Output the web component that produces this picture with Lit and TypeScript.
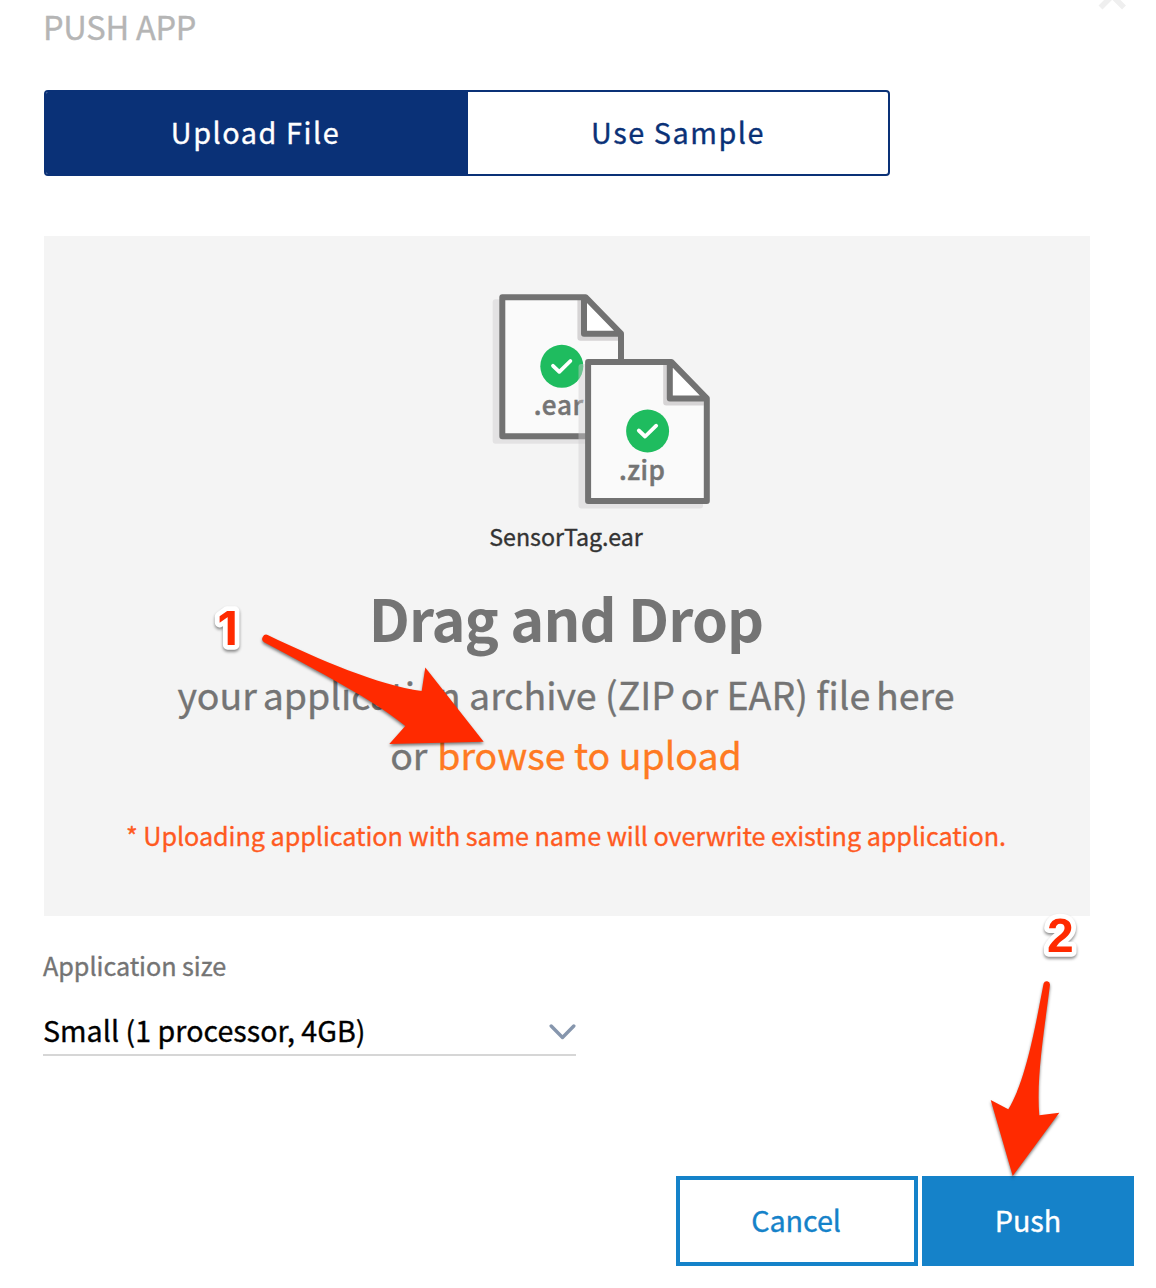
import { LitElement, html, svg, css } from "lit";
import { customElement, state } from "lit/decorators.js";

const fileIcon = (label: string, x: number, labelWidth: number, dx: number, dy: number) => svg`
  <g transform="translate(${dx} ${dy})">
    <path d="M495.700 299.300H570L617.200 350V440.700a3 3 0 0 1-3 3H495.700a3 3 0 0 1-3-3V302.300a3 3 0 0 1 3-3Z" fill="#cfccce" fill-opacity=".45"/>
    <path d="M502.3 297.2H585.5L621 333.7V436.2H502.3Z" fill="#fafafa"/>
    <path d="M577.4 300H586V333H618V340.8H580.4a3 3 0 0 1-3-3Z" fill="#d6d4d5"/>
    <path d="M584 297.2V333.7H621Z" fill="#fff"/>
    <path d="M502.3 297.2H585.5L621 333.7V436.2H502.3ZM584 297.2V333.7H621" fill="none" stroke="#727272" stroke-width="6" stroke-linejoin="round" stroke-linecap="round"/>
    <circle cx="561.8" cy="366.3" r="21.5" fill="#1fbc5f"/>
    <path d="M553 365.8L559.3 371.8L570.4 361" fill="none" stroke="#fff" stroke-width="3.8" stroke-linecap="round" stroke-linejoin="round"/>
    <text class="ext" x=${x} y="415" textLength=${labelWidth}>${label}</text>
  </g>`;

@customElement("app-root")
export class AppRoot extends LitElement {
  @state() private tab = 0;

  static styles = css`
    :host {
      display: block;
      position: relative;
      width: 1156px;
      height: 1288px;
      overflow: hidden;
      background: #fff;
      color: #747474;
      font-family: "Noto Sans CJK SC", "Open Sans", sans-serif;
      -webkit-text-stroke: 0.35px currentColor;
      box-sizing: border-box;
    }
    * { box-sizing: border-box; }
    button {
      font: inherit;
      margin: 0;
      padding: 0;
      border: 0;
      background: none;
      cursor: pointer;
      white-space: nowrap;
    }
    .dialog { padding: 0 22px 0 44px; display: flex; flex-direction: column; }
    .header { display: flex; justify-content: space-between; height: 90px; }
    .title {
      margin: 0 0 0 -1px;
      font-size: 32.6px;
      line-height: 51px;
      letter-spacing: -0.25px;
      font-weight: 400;
      color: #b5b5b5;
    }
    .close { margin: -21px 5px 0 0; width: 34px; height: 34px; display: block; }
    .tabs {
      display: flex;
      width: 846px;
      height: 86px;
      border: 2px solid #0a3177;
      border-radius: 4px;
      overflow: hidden;
    }
    .tab {
      flex: 0 0 422px;
      padding: 0 3px 3px 0;
      font-size: 28.8px;
      letter-spacing: 1.55px;
      color: #0a3177;
    }
    .tab:last-child { flex: 1; padding-right: 0; }
    .tab.active { background: #0a3177; color: #fff; }
    .drop {
      display: flex;
      flex-direction: column;
      align-items: center;
      width: 1046px;
      height: 680px;
      margin-top: 60px;
      padding: 54px 2px 0 0;
      background: #f4f4f4;
      white-space: nowrap;
    }
    .files { display: block; width: 225px; height: 222px; flex: none; margin-left: 73px; }
    .ext { font-size: 26px; font-weight: 500; fill: #747474; stroke: #747474; stroke-width: 0.5px; }
    .filename { margin-top: 7.2px; font-size: 23.2px; line-height: 34px; color: #333; }
    .drag {
      margin: 24.2px 0 0;
      font-size: 57.6px;
      line-height: 80px;
      letter-spacing: -0.85px;
      font-weight: 700;
      -webkit-text-stroke: 0;
    }
    .hint { margin-top: 6.3px; font-size: 37.5px; line-height: 60px; text-align: center; }
    .tight { margin-right: -2.6px; }
    .or { margin-right: 1.5px; }
    .browse { color: #ff7a22; }
    .warning {
      margin-top: 31px;
      font-size: 25.2px;
      line-height: 40px;
      letter-spacing: -0.05px;
      color: #ff5a1f;
    }
    .label { margin: 28.7px 0 0 -1px; font-size: 25.2px; line-height: 40px; letter-spacing: -0.05px; }
    .select {
      display: flex;
      justify-content: space-between;
      align-items: center;
      width: 533px;
      height: 52px;
      margin: 19.3px 0 0 -1px;
      padding-top: 2px;
      border-bottom: 2px solid #d6d6d6;
      font-size: 28.6px;
      line-height: 48px;
      letter-spacing: 0.04px;
      color: #000;
    }
    .chevron { width: 27px; height: 18px; margin-top: 4px; }
    .footer { display: flex; justify-content: flex-end; gap: 4px; margin-top: 120px; }
    .btn { height: 90px; padding-bottom: 2px; font-size: 28.8px; }
    .cancel { width: 242px; padding-right: 2px; border: 4px solid #1582c9; color: #1582c9; letter-spacing: -0.1px; }
    .push { width: 212px; background: #1582c9; color: #fff; }
    .notes { position: absolute; inset: 0; pointer-events: none; }
    .arrow { fill: #ff2a00; filter: drop-shadow(0 2px 1.5px rgba(0, 0, 0, 0.5)); }
    .num {
      font: 700 48px "Liberation Sans", sans-serif;
      fill: #ff2a00;
      stroke: #fff;
      stroke-width: 9.5px;
      stroke-linejoin: round;
      paint-order: stroke;
      filter: drop-shadow(0 2px 1.5px rgba(0, 0, 0, 0.45));
    }
    .num.one { font-family: Inter, sans-serif; font-size: 47px; }
  `;

  render() {
    return html`
      <div class="dialog">
        <div class="header">
          <h1 class="title">PUSH APP</h1>
          <svg class="close" viewBox="0 0 34 34" fill="none" stroke="#efefef" stroke-width="5.6">
            <path d="M5.500 5L29 28.500M29 5L5.500 28.500" />
          </svg>
        </div>
        <div class="tabs">
          ${["Upload File", "Use Sample"].map(
            (t, i) => html`<button class="tab ${this.tab === i ? "active" : ""}" @click=${() => (this.tab = i)}>${t}</button>`
          )}
        </div>
        <div class="drop">
          <svg class="files" viewBox="490 290 225 222">
            ${fileIcon(".ear", 533.7, 49.5, 0, 0)} ${fileIcon(".zip", 533.2, 46, 85.8, 64.7)}
          </svg>
          <div class="filename">SensorTag.ear</div>
          <h2 class="drag">Drag and Drop</h2>
          <div class="hint">
            <div><span class="tight">your</span> application archive <span class="tight">(ZIP</span> or EAR) <span class="tight">file</span> here</div>
            <div><span class="or">or</span> <span class="browse">browse to upload</span></div>
          </div>
          <div class="warning">* Uploading application with same name will overwrite existing application.</div>
        </div>
        <div class="label">Application size</div>
        <div class="select">
          <span>Small (1 processor, 4GB)</span>
          <svg class="chevron" viewBox="0 0 27 18" fill="none" stroke="#8696ad" stroke-width="3.400" stroke-linecap="round" stroke-linejoin="round">
            <path d="M2.200 3L13.500 14.500L24.800 3" />
          </svg>
        </div>
        <div class="footer">
          <button class="btn cancel">Cancel</button>
          <button class="btn push">Push</button>
        </div>
      </div>
      <svg class="notes" width="1156" height="1288" viewBox="0 0 1156 1288">
        <path class="arrow" d="M268.200 635.200C320 660 378 685 421.700 691L425.300 667.500L483.700 741.700L389.300 744L405.300 726C375 701 320 672 264.500 642.500A4 4 0 0 1 268.200 635.200Z" />
        <path class="arrow" d="M1043.600 983.500A3.300 3.300 0 0 1 1050 984.500C1045 1026 1036 1077 1039.300 1115.300L1059.300 1112.700L1012.700 1176L990.700 1100L1008.300 1109.300C1026 1080 1035 1028 1043.600 983.500Z" />
        <text class="num one" x="217.500" y="645">1</text>
        <text class="num" x="1047" y="952">2</text>
      </svg>
    `;
  }
}
